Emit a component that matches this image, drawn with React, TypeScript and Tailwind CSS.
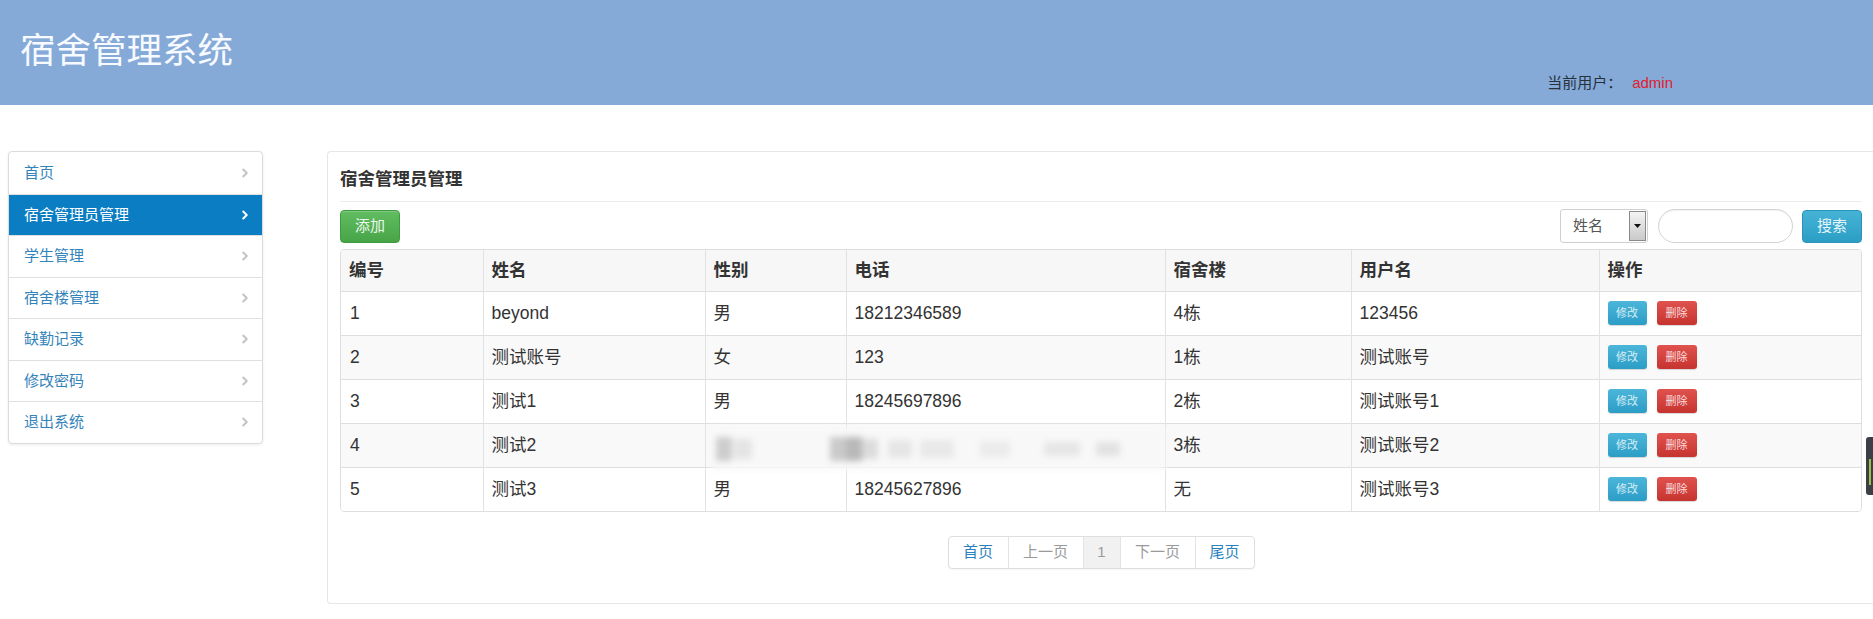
import React from "react";
import { ChevronRight } from "lucide-react";

const FONT = { fontFamily: '"Liberation Sans", "Noto Sans CJK SC", sans-serif' };

const MENU = ["首页", "宿舍管理员管理", "学生管理", "宿舍楼管理", "缺勤记录", "修改密码", "退出系统"];

const COLUMNS = [
  { label: "编号", w: "w-[142px]" },
  { label: "姓名", w: "w-[222px]" },
  { label: "性别", w: "w-[141px]" },
  { label: "电话", w: "w-[319px]" },
  { label: "宿舍楼", w: "w-[186px]" },
  { label: "用户名", w: "w-[248px]" },
  { label: "操作", w: "" },
];

const ROWS = [
  { id: "1", name: "beyond", sex: "男", phone: "18212346589", building: "4栋", user: "123456" },
  { id: "2", name: "测试账号", sex: "女", phone: "123", building: "1栋", user: "测试账号" },
  { id: "3", name: "测试1", sex: "男", phone: "18245697896", building: "2栋", user: "测试账号1" },
  { id: "4", name: "测试2", sex: "", phone: "", building: "3栋", user: "测试账号2" },
  { id: "5", name: "测试3", sex: "男", phone: "18245627896", building: "无", user: "测试账号3" },
];

function Sidebar() {
  return (
    <div className="w-[255px] shrink-0 overflow-hidden rounded-[4px] border border-[#dcdcdc] bg-white shadow-[0_1px_3px_rgba(0,0,0,0.08)]">
      {MENU.map((item, i) => {
        const active = i === 1;
        return (
          <div
            key={item}
            className={`flex h-[41.5px] items-center justify-between pl-[15px] pr-[10px] text-[15px] ${
              i > 0 ? "border-t border-[#e0e0e0]" : ""
            } ${active ? "bg-[#0b7dc2] text-white" : "text-[#3383bb]"}`}
          >
            <span>{item}</span>
            <ChevronRight
              size={14}
              strokeWidth={3.5}
              className={active ? "text-white" : "text-[#c4c4c4]"}
            />
          </div>
        );
      })}
    </div>
  );
}

function Toolbar() {
  return (
    <div className="mt-[7px] flex items-center justify-between">
      <button className="h-[33px] w-[60px] rounded-[4px] border border-[#3e9a3e] bg-gradient-to-b from-[#62bd62] to-[#47a447] text-[15px] text-[#eaf7ea] shadow-[inset_0_1px_0_rgba(255,255,255,0.2)]">
        添加
      </button>
      <div className="flex items-center">
        <div className="flex h-[34px] w-[88px] items-center justify-between rounded-[3px] border border-[#cfcfcf] bg-white pl-[12px] pr-[1px]">
          <span className="text-[15px] text-[#555]">姓名</span>
          <div className="flex h-[30px] w-[17px] items-center justify-center border border-[#8a8a8a] bg-gradient-to-b from-[#f4f4f4] to-[#c9c9c9]">
            <svg width="7" height="4" viewBox="0 0 7 4">
              <path d="M0 0h7L3.5 4z" fill="#111" />
            </svg>
          </div>
        </div>
        <div className="ml-[10px] h-[34px] w-[135px] rounded-full border border-[#d3d3d3] bg-white shadow-[inset_0_1px_1px_rgba(0,0,0,0.06)]" />
        <button className="ml-[9px] h-[33px] w-[60px] rounded-[4px] border border-[#2a94b8] bg-gradient-to-b from-[#45b3d6] to-[#2b9ec5] text-[15px] text-[#e6f5fa]">
          搜索
        </button>
      </div>
    </div>
  );
}

function ActionButtons() {
  return (
    <div className="flex items-center gap-[10px]">
      <span className="flex h-[24px] w-[39px] items-center justify-center rounded-[3px] bg-gradient-to-b from-[#4cb6da] to-[#2b9dc6] text-[11px] text-[#d8eef6] shadow-[0_1px_1px_rgba(0,0,0,0.15)]">
        修改
      </span>
      <span className="flex h-[24px] w-[40px] items-center justify-center rounded-[3px] bg-gradient-to-b from-[#e0524e] to-[#c63330] text-[11px] text-[#f8dede] shadow-[0_1px_1px_rgba(0,0,0,0.15)]">
        删除
      </span>
    </div>
  );
}

function DataTable() {
  return (
    <div className="relative mt-[6px] overflow-hidden rounded-[4px] border border-[#dedede]">
      <table className="w-full border-collapse text-[17.5px] text-[#333]">
        <thead>
          <tr className="h-[41px] bg-[#f7f7f7]">
            {COLUMNS.map((c, i) => (
              <th
                key={c.label}
                className={`${c.w} px-[8px] text-left font-bold ${i > 0 ? "border-l border-[#e2e2e2]" : ""}`}
              >
                {c.label}
              </th>
            ))}
          </tr>
        </thead>
        <tbody>
          {ROWS.map((r, i) => (
            <tr key={r.id} className={`h-[44px] border-t border-[#dedede] ${i % 2 === 1 ? "bg-[#f9f9f9]" : "bg-white"}`}>
              <td className="px-[9px]">{r.id}</td>
              <td className="border-l border-[#e2e2e2] px-[8px]">{r.name}</td>
              <td className="border-l border-[#e2e2e2] px-[8px]">{r.sex}</td>
              <td className="border-l border-[#e2e2e2] px-[8px]">{r.phone}</td>
              <td className="border-l border-[#e2e2e2] px-[8px]">{r.building}</td>
              <td className="border-l border-[#e2e2e2] px-[8px]">{r.user}</td>
              <td className="border-l border-[#e2e2e2] px-[8px]">
                <ActionButtons />
              </td>
            </tr>
          ))}
        </tbody>
      </table>
      {/* mosaic over row 4 */}
      <div className="pointer-events-none absolute left-[371px] top-[177px] h-[43px] w-[453px] bg-[#f8f8f8] blur-[3px]">
        <div className="flex h-full items-center">
          <div className="ml-[4px] h-[24px] w-[16px] bg-[#cdcdcd]" />
          <div className="ml-[2px] h-[20px] w-[18px] bg-[#e4e4e4]" />
          <div className="ml-[78px] h-[24px] w-[16px] bg-[#cacaca]" />
          <div className="h-[24px] w-[16px] bg-[#b9b9b9]" />
          <div className="h-[20px] w-[16px] bg-[#dcdcdc]" />
          <div className="ml-[10px] h-[18px] w-[24px] bg-[#e6e6e6]" />
          <div className="ml-[8px] h-[18px] w-[34px] bg-[#e9e9e9]" />
          <div className="ml-[26px] h-[16px] w-[30px] bg-[#ebebeb]" />
          <div className="ml-[34px] h-[14px] w-[36px] bg-[#e6e6e6]" />
          <div className="ml-[16px] h-[14px] w-[24px] bg-[#e2e2e2]" />
        </div>
      </div>
    </div>
  );
}

function Pagination() {
  const items = [
    { t: "首页", w: "w-[59px]", cls: "text-[#2a82bd]" },
    { t: "上一页", w: "w-[75px]", cls: "text-[#9a9a9a]" },
    { t: "1", w: "w-[37px]", cls: "bg-[#f1f1f1] text-[#9a9a9a]" },
    { t: "下一页", w: "w-[75px]", cls: "text-[#9a9a9a]" },
    { t: "尾页", w: "w-[59px]", cls: "text-[#2a82bd]" },
  ];
  return (
    <div className="mt-[24px] flex justify-center">
      <div className="flex h-[33px] overflow-hidden rounded-[4px] border border-[#dedede] shadow-[0_1px_2px_rgba(0,0,0,0.04)]">
        {items.map((it, i) => (
          <div
            key={it.t}
            className={`flex ${it.w} items-center justify-center text-[15px] ${it.cls} ${i > 0 ? "border-l border-[#e3e3e3]" : ""}`}
          >
            {it.t}
          </div>
        ))}
      </div>
    </div>
  );
}

export default function App() {
  return (
    <div className="relative h-[619px] w-[1873px] overflow-hidden bg-white" style={FONT}>
      <header className="flex h-[105px] items-start justify-between bg-[#85aad8]">
        <h1 className="ml-[20px] mt-[30px] text-[35.5px] font-normal leading-[42px] text-[#f7faff]">宿舍管理系统</h1>
        <div className="mr-[200px] mt-[73px] flex items-center text-[15px] leading-[20px]">
          <span className="text-[#27313c]">当前用户：</span>
          <span className="ml-[10px] text-[#e0202c]">admin</span>
        </div>
      </header>

      <div className="flex items-start pt-[46px]">
        <div className="ml-[8px]">
          <Sidebar />
        </div>
        <main className="ml-[64px] flex-1 rounded-l-[4px] border border-r-0 border-[#e6e6e6] bg-white pb-[34px] pl-[12px] pr-[11px] pt-[15px]">
          <h2 className="text-[17.5px] font-bold leading-[24px] text-[#333]">宿舍管理员管理</h2>
          <div className="mt-[10px] border-t border-[#ececec]" />
          <Toolbar />
          <DataTable />
          <Pagination />
        </main>
      </div>

      {/* floating widget tab on the right edge */}
      <div className="absolute right-0 top-[437px] h-[58px] w-[7px] rounded-l-[3px] bg-[#3b4046]">
        <div className="ml-[3px] mt-[22px] h-[26px] w-[2px] bg-[#9dbf4a]" />
      </div>
    </div>
  );
}
